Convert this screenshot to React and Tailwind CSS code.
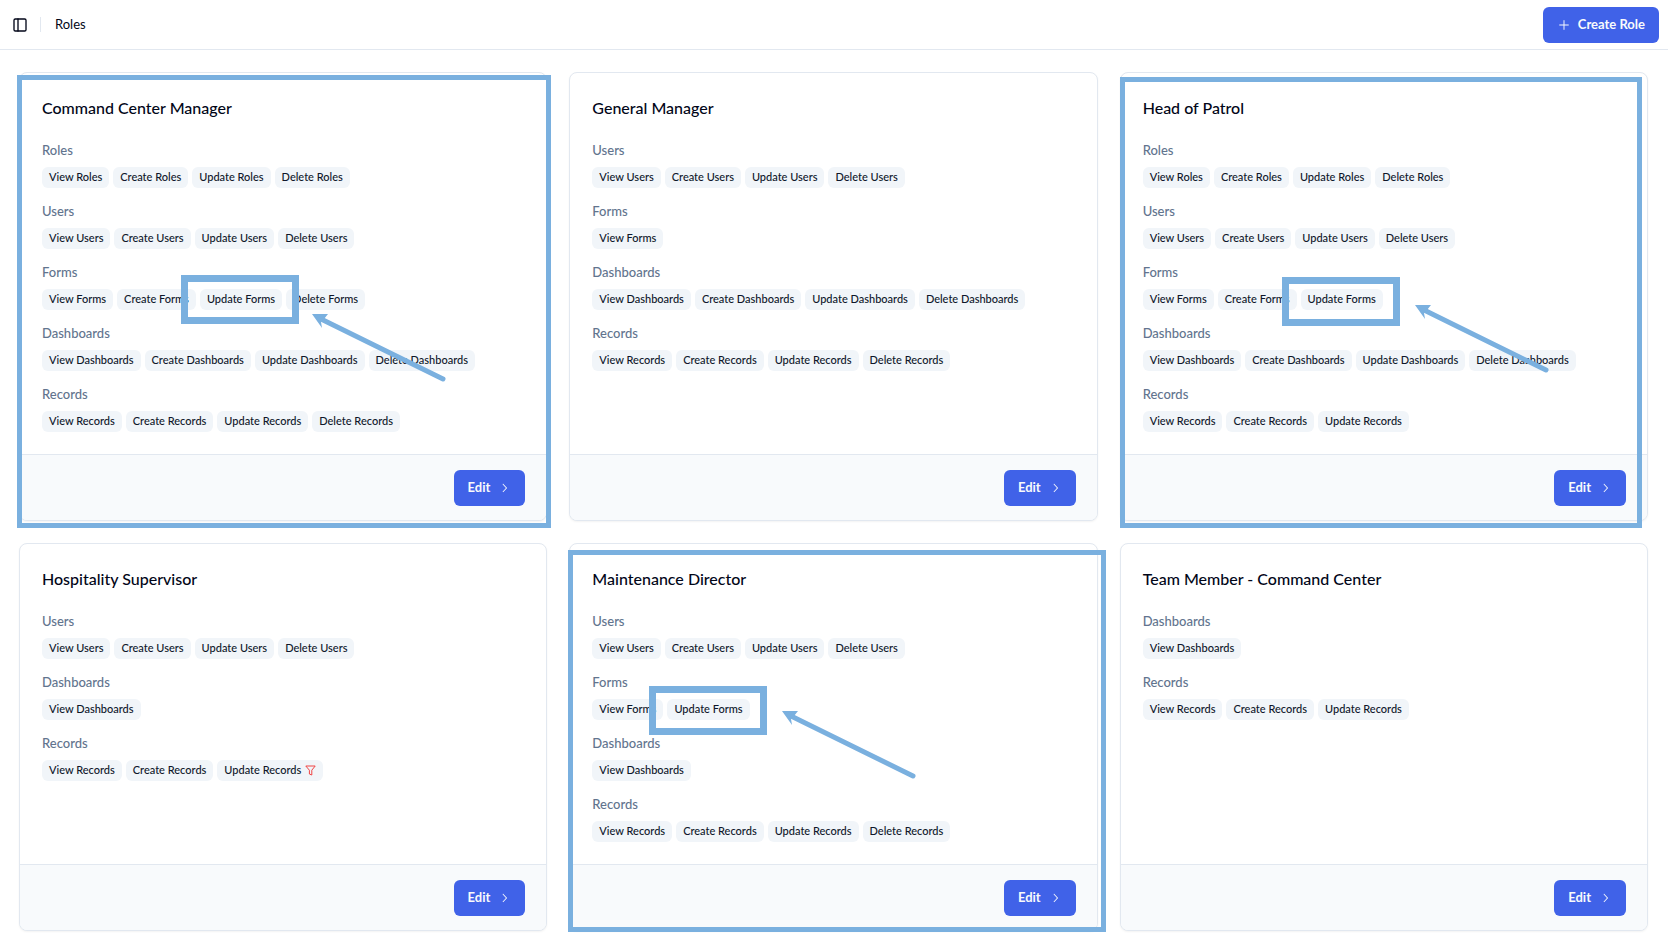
import { PanelLeft } from 'lucide-react';
import { RxChevronRight, RxPlus } from 'react-icons/rx';

const ALL = ['View', 'Create', 'Update', 'Delete'];
const group = (name, ...verbs) => ({ name, items: verbs.map((verb) => `${verb} ${name}`) });

const roles = [
  {
    name: 'Command Center Manager',
    groups: [
      group('Roles', ...ALL),
      group('Users', ...ALL),
      group('Forms', ...ALL),
      group('Dashboards', ...ALL),
      group('Records', ...ALL),
    ],
    marks: {
      frame: '-left-[2px] -right-[4px] top-[3px] -bottom-[7px]',
      box: 'left-[162px] top-[203px]',
      arrow: 'left-[293px] top-[242px]',
    },
  },
  {
    name: 'General Manager',
    groups: [
      group('Users', ...ALL),
      group('Forms', 'View'),
      group('Dashboards', ...ALL),
      group('Records', ...ALL),
    ],
  },
  {
    name: 'Head of Patrol',
    groups: [
      group('Roles', ...ALL),
      group('Users', ...ALL),
      group('Forms', 'View', 'Create', 'Update'),
      group('Dashboards', ...ALL),
      group('Records', 'View', 'Create', 'Update'),
    ],
    marks: {
      frame: 'left-0 right-[6px] top-[5px] -bottom-[7px]',
      box: 'left-[162px] top-[205px]',
      arrow: 'left-[295px] top-[233px]',
    },
  },
  {
    name: 'Hospitality Supervisor',
    filtered: 'Update Records',
    groups: [
      group('Users', ...ALL),
      group('Dashboards', 'View'),
      group('Records', 'View', 'Create', 'Update'),
    ],
  },
  {
    name: 'Maintenance Director',
    groups: [
      group('Users', ...ALL),
      group('Forms', 'View', 'Update'),
      group('Dashboards', 'View'),
      group('Records', ...ALL),
    ],
    marks: {
      frame: '-left-px -right-[8px] top-[7px] -bottom-px',
      box: 'left-[80px] top-[143px]',
      arrow: 'left-[213px] top-[168px]',
    },
  },
  {
    name: 'Team Member - Command Center',
    groups: [
      group('Dashboards', 'View'),
      group('Records', 'View', 'Create', 'Update'),
    ],
  },
];

const FilterIcon = () => (
  <svg width="11" height="11" viewBox="0 0 11 11" fill="none" stroke="#ef4444" strokeLinejoin="round" aria-hidden="true">
    <path d="M.8 1h9.4L6.8 5.2V10L4.4 9V5.2z" />
  </svg>
);

// Highlight drawn over a card: outer frame, inner box and the arrow next to it
const Marks = ({ frame, box, arrow }) => (
  <div className="pointer-events-none">
    <div className={`absolute border-5 border-[#7ab0df] ${frame}`} />
    <div className={`absolute h-[49px] w-[118px] border-7 border-[#7ab0df] ${box}`} />
    <svg className={`absolute ${arrow}`} width="136" height="70" viewBox="0 0 136 70" aria-hidden="true">
      <path d="M9 5 131 65" stroke="#7ab0df" strokeWidth="5" strokeLinecap="round" />
      <path d="M0 0 16 0 12 5 9 8 10 14z" fill="#7ab0df" />
    </svg>
  </div>
);

const Button = ({ children, className = '' }) => (
  <button
    className={`flex h-9 items-center gap-[7px] rounded-md bg-[#4062e8] px-[14px] text-[13px] font-bold text-slate-50 ${className}`}
  >
    {children}
  </button>
);

const RoleCard = ({ role }) => (
  <article className="relative flex">
    <div className="flex flex-1 flex-col overflow-hidden rounded-lg border border-slate-200 bg-white shadow-xs">
      <div className="flex-1 p-[22px]">
        <h2 className="text-base leading-[26px] font-medium">{role.name}</h2>
        <div className="mt-5 flex flex-col gap-[14px]">
          {role.groups.map(({ name, items }) => (
            <section key={name}>
              <h3 className="text-[13px] leading-[19px] font-medium text-slate-500">{name}</h3>
              <ul className="mt-[7px] flex flex-wrap gap-1">
                {items.map((item) => (
                  <li
                    key={item}
                    className="flex h-[21px] items-center gap-1 rounded-md bg-slate-100 px-[7px] text-[11px] font-medium text-slate-900"
                  >
                    {item}
                    {item === role.filtered && <FilterIcon />}
                  </li>
                ))}
              </ul>
            </section>
          ))}
        </div>
      </div>
      <footer className="flex justify-end border-t border-slate-200 bg-slate-50 pt-[15px] pr-[21px] pb-[14px] pl-[22px]">
        <Button>
          Edit
          <RxChevronRight size={14} />
        </Button>
      </footer>
    </div>
    {role.marks && <Marks {...role.marks} />}
  </article>
);

export default function App() {
  return (
    <div className="bg-white font-[Lato,sans-serif] text-slate-950">
      <header className="flex h-[50px] items-center border-b border-slate-200 pr-[9px] pl-3">
        <button aria-label="Toggle sidebar">
          <PanelLeft size={16} />
        </button>
        <span className="ml-3 h-[15px] w-px bg-slate-200" />
        <h1 className="ml-[14px] text-[13px]">Roles</h1>
        <Button className="ml-auto">
          <RxPlus size={14} />
          Create Role
        </Button>
      </header>
      <main className="grid grid-cols-3 gap-[22px] pt-[22px] pr-5 pb-5 pl-[19px]">
        {roles.map((role) => (
          <RoleCard key={role.name} role={role} />
        ))}
      </main>
    </div>
  );
}
